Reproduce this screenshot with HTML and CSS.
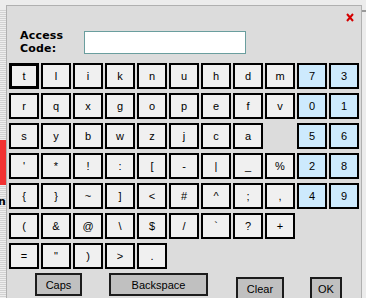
FILE: index.html
```html
<!DOCTYPE html>
<html>
<head>
<meta charset="utf-8">
<link rel="stylesheet" href="styles.css">
</head>
<body>
<div class="side">
  <div class="stripes">
    <div class="red"></div>
    <span class="cut">n</span>
  </div>
</div>
<div class="panel">
  <div class="header">
    <svg class="close" width="8" height="9" viewBox="0 0 8 9"><path d="M1 1 L7 8 M7 1 L1 8" stroke="#d40000" stroke-width="2" fill="none"/></svg>
  </div>
  <div class="access">
    <label class="label">Access<br>Code:</label>
    <input class="code" type="text">
  </div>
  <div class="keys">
    <div class="key focus">t</div><div class="key">l</div><div class="key">i</div><div class="key">k</div><div class="key">n</div><div class="key">u</div><div class="key">h</div><div class="key">d</div><div class="key">m</div><div class="key num">7</div><div class="key num">3</div>
    <div class="key">r</div><div class="key">q</div><div class="key">x</div><div class="key">g</div><div class="key">o</div><div class="key">p</div><div class="key">e</div><div class="key">f</div><div class="key">v</div><div class="key num">0</div><div class="key num">1</div>
    <div class="key">s</div><div class="key">y</div><div class="key">b</div><div class="key">w</div><div class="key">z</div><div class="key">j</div><div class="key">c</div><div class="key">a</div><div class="blank"></div><div class="key num">5</div><div class="key num">6</div>
    <div class="key">'</div><div class="key">*</div><div class="key">!</div><div class="key">:</div><div class="key">[</div><div class="key">-</div><div class="key">|</div><div class="key">_</div><div class="key">%</div><div class="key num">2</div><div class="key num">8</div>
    <div class="key">{</div><div class="key">}</div><div class="key">~</div><div class="key">]</div><div class="key">&lt;</div><div class="key">#</div><div class="key">^</div><div class="key">;</div><div class="key">,</div><div class="key num">4</div><div class="key num">9</div>
    <div class="key">(</div><div class="key">&amp;</div><div class="key">@</div><div class="key">\</div><div class="key">$</div><div class="key">/</div><div class="key">`</div><div class="key">?</div><div class="key">+</div><div class="blank"></div><div class="blank"></div>
    <div class="key">=</div><div class="key">&quot;</div><div class="key">)</div><div class="key">&gt;</div><div class="key">.</div>
  </div>
  <div class="actions">
    <div class="btn caps">Caps</div>
    <div class="btn back">Backspace</div>
    <div class="btn clear">Clear</div>
    <div class="btn ok">OK</div>
  </div>
</div>
<div class="rside"><div class="tick"></div></div>
</body>
</html>
```
FILE: styles.css
```css
html, body {
  margin: 0;
  padding: 0;
}
body {
  width: 366px;
  height: 298px;
  overflow: hidden;
  background: #ececec;
  display: flex;
  align-items: flex-start;
  font-family: "Liberation Sans", Arial, sans-serif;
}
.side {
  width: 6px;
  flex: none;
  padding-top: 10px;
  overflow: hidden;
}
.stripes {
  height: 288px;
  background: repeating-linear-gradient(to bottom, #d2d2d2 0 1px, #eeeeee 1px 2px);
  padding-top: 130px;
  box-sizing: border-box;
  overflow: hidden;
}
.red {
  height: 45px;
  background: #f23232;
}
.cut {
  display: block;
  margin-top: 11px;
  margin-left: -2px;
  font: bold 11px "DejaVu Sans", sans-serif;
  color: #000;
  line-height: 12px;
}
.panel {
  width: 356px;
  height: 293px;
  flex: none;
  box-sizing: border-box;
  margin-top: 5px;
  border: 1px solid #b0b0b0;
  border-bottom: none;
  background: #dcdcdc;
  overflow: hidden;
}
.header {
  display: flex;
  justify-content: flex-end;
  padding: 7px 7px 0 0;
  height: 9px;
}
.close {
  display: block;
}
.access {
  display: flex;
  align-items: center;
  margin: 7px 0 0 13px;
}
.label {
  width: 64px;
  font: bold 11px "DejaVu Sans", Verdana, sans-serif;
  line-height: 13px;
  letter-spacing: 0.2px;
  color: #000;
}
.code {
  width: 162px;
  height: 23px;
  box-sizing: border-box;
  margin: 0;
  border: 1px solid #6a9e9e;
  background: #fff;
  padding: 0;
}
.keys {
  display: grid;
  grid-template-columns: repeat(11, 30px);
  grid-auto-rows: 26px;
  column-gap: 2px;
  row-gap: 4px;
  margin: 8px 0 0 2px;
}
.key {
  box-sizing: border-box;
  border: 2px solid #000;
  background: #f0f0f0;
  display: flex;
  align-items: center;
  justify-content: center;
  font-size: 11px;
  color: #000;
}
.key.focus {
  border-width: 3px;
}
.key.num {
  background: #cdeafd;
}
.actions {
  display: flex;
  align-items: flex-start;
  margin: 4px 0 0 28px;
}
.btn {
  box-sizing: border-box;
  height: 23px;
  border: 2px solid #1c1c1c;
  background: #c0c0c0;
  display: flex;
  align-items: center;
  justify-content: center;
  font-size: 11px;
  color: #000;
}
.caps { width: 47px; }
.back { width: 99px; margin-left: 27px; }
.clear { width: 48px; margin-left: 28px; margin-top: 4px; }
.ok { width: 32px; margin-left: 26px; margin-top: 4px; }
.rside {
  width: 4px;
  flex: none;
  padding-top: 10px;
}
.tick {
  height: 2px;
  background: #9a9a9a;
}
```
